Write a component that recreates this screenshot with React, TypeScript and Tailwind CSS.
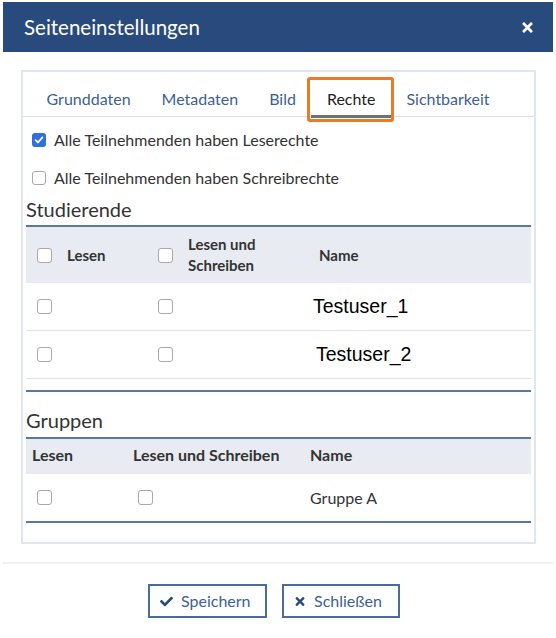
import { FaCheck, FaTimes } from "react-icons/fa";

function Box({ checked = false, size = "w-[14px] h-[14px]" }: { checked?: boolean; size?: string }) {
  if (checked) {
    return (
      <span className={"inline-flex rounded-[3px] bg-[#2f6fe0] items-center justify-center shrink-0 " + size}>
        <svg width="10" height="10" viewBox="0 0 10 10">
          <path d="M1.6 5.2 L4 7.5 L8.4 2.4" fill="none" stroke="white" strokeWidth="1.8" strokeLinecap="round" strokeLinejoin="round" />
        </svg>
      </span>
    );
  }
  return <span className={"inline-block rounded-[3px] border border-[#a9a9a9] bg-white shrink-0 " + size} />;
}

const tabs = ["Grunddaten", "Metadaten", "Bild", "Rechte", "Sichtbarkeit"];
const tb = "w-[15px] h-[15px]";

export default function App() {
  return (
    <div className="w-[556px] h-[638px] bg-white font-['Lato',sans-serif] text-[#333]">
      <div className="pt-[2px] px-[3px]">
        <div className="h-[50px] bg-[#284a7c] flex items-center justify-between pl-[21px] pr-[18px]">
          <span className="text-white text-[20.5px]">Seiteneinstellungen</span>
          <FaTimes className="text-white w-[15px] h-[15px]" />
        </div>
      </div>

      <div className="mt-[18px] ml-[21px] w-[515px] h-[474px] border-2 border-[#e1e6ee]">
        <div className="flex h-[45px] pl-[8px] border-b border-[#d9dfe8] text-[16px] text-[#3d5f94]">
          {tabs.map((t) =>
            t === "Rechte" ? (
              <div key={t} className="relative px-[15.5px] pt-[15px] border-b-[3px] border-[#6d7178] mb-[-2px] text-[#222]">
                {t}
                <div className="absolute left-[-4px] right-[-3px] top-[5px] bottom-[-7px] border-[3px] border-[#ea7a26] rounded-[3px]" />
              </div>
            ) : (
              <div key={t} className="px-[15.5px] pt-[15px]">
                {t}
              </div>
            )
          )}
        </div>

        <div className="px-[9px] text-[16px]">
          <label className="flex items-center gap-[8px] h-[22px] mt-[12px]">
            <Box checked />
            Alle Teilnehmenden haben Leserechte
          </label>
          <label className="flex items-center gap-[8px] h-[22px] mt-[16px]">
            <Box />
            Alle Teilnehmenden haben Schreibrechte
          </label>
        </div>

        <div className="px-[3px]">
          <div className="text-[20px] mt-[9px] leading-[22px]">Studierende</div>
          <div className="mt-[5px] border-t-2 border-[#5b78a3]">
            <div className="flex h-[56px] bg-[#e8ecf2] text-[15px] font-bold items-center">
              <div className="w-[121px] pl-[11px] flex items-center gap-[15px]">
                <Box size={tb} />
                Lesen
              </div>
              <div className="w-[161px] pl-[11px] flex items-center gap-[15px]">
                <Box size={tb} />
                <span className="leading-[21px]">
                  Lesen und
                  <br />
                  Schreiben
                </span>
              </div>
              <div className="pl-[11px]">Name</div>
            </div>
            {["Testuser_1", "Testuser_2"].map((n, i) => (
              <div key={n} className="flex h-[48px] items-center border-b border-[#e3e3e3]">
                <div className="w-[121px] pl-[11px] flex">
                  <Box size={tb} />
                </div>
                <div className="w-[161px] pl-[11px] flex">
                  <Box size={tb} />
                </div>
                <div className={"font-['Liberation_Sans',sans-serif] text-[19.5px] text-black " + (i === 0 ? "pl-[5px]" : "pl-[8px]")}>{n}</div>
              </div>
            ))}
            <div className="h-[11px]" />
            <div className="border-t-2 border-[#5b78a3]" />
          </div>

          <div className="text-[20px] mt-[17px] leading-[22px]">Gruppen</div>
          <div className="mt-[6px] border-t-2 border-[#5b78a3]">
            <div className="flex h-[35px] pb-[4px] bg-[#e8ecf2] text-[16px] font-bold items-center">
              <div className="w-[101px] pl-[6px]">Lesen</div>
              <div className="w-[177px] pl-[6px]">Lesen und Schreiben</div>
              <div className="pl-[6px]">Name</div>
            </div>
            <div className="flex h-[47px] items-center text-[16px]">
              <div className="w-[101px] pl-[11px] flex">
                <Box size={tb} />
              </div>
              <div className="w-[177px] pl-[11px] flex">
                <Box size={tb} />
              </div>
              <div className="pl-[6px]">Gruppe A</div>
            </div>
            <div className="border-t-2 border-[#5b78a3]" />
          </div>
        </div>
      </div>

      <div className="mt-[18px] mx-[3px] h-[2px] bg-[#f1f1f1]" />

      <div className="flex justify-center gap-[15px] mt-[20px] pr-[8px]">
        <button className="flex items-center gap-[8px] w-[119px] h-[34px] pl-[10px] border-2 border-[#4b6b9b] text-[16px] text-[#3d5f94]">
          <FaCheck className="w-[13px] h-[13px] text-[#284a7c]" />
          Speichern
        </button>
        <button className="flex items-center gap-[8px] w-[118px] h-[34px] pl-[10px] border-2 border-[#4b6b9b] text-[16px] text-[#3d5f94]">
          <FaTimes className="w-[12px] h-[13px] text-[#284a7c]" />
          Schließen
        </button>
      </div>
    </div>
  );
}
